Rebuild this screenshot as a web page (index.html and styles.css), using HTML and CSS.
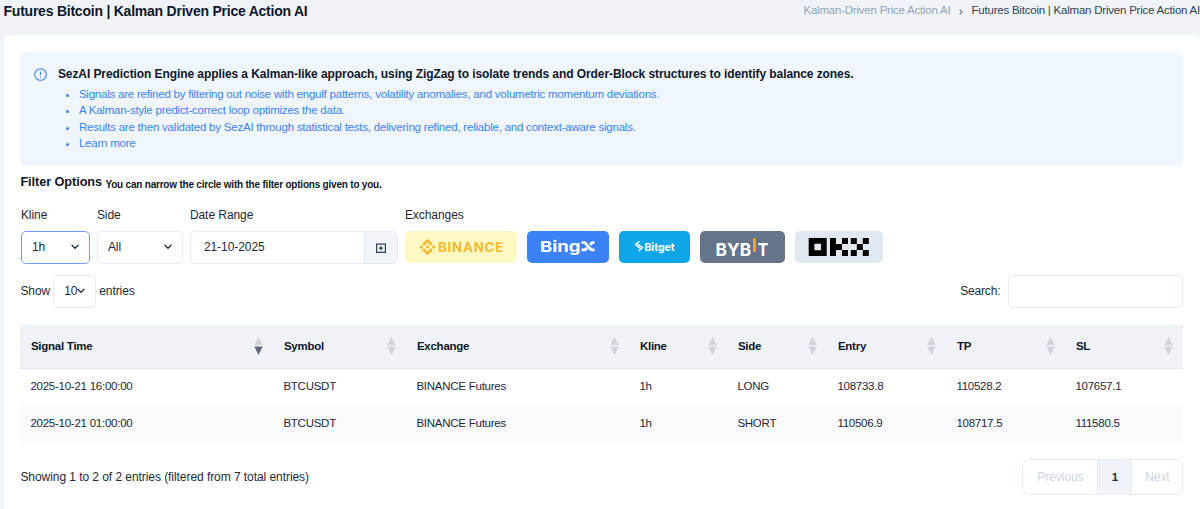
FILE: index.html
```html
<!DOCTYPE html>
<html lang="en">
<head>
<meta charset="utf-8">
<title>Futures Bitcoin | Kalman Driven Price Action AI</title>
<link rel="stylesheet" href="styles.css">
</head>
<body>
<svg class="defs" width="0" height="0">
  <symbol id="chev" viewBox="0 0 8 6"><path d="M1 1.2 4 4.4 7 1.2" fill="none" stroke="#1e293b" stroke-width="1.3" stroke-linecap="round" stroke-linejoin="round"/></symbol>
  <symbol id="sort" viewBox="0 0 9 18"><path class="up" d="M4.5 0 8.7 8H.3z"/><path class="down" d="M4.5 18 8.7 9.6H.3z"/></symbol>
</svg>
<header class="top">
  <h1>Futures Bitcoin | Kalman Driven Price Action AI</h1>
  <nav class="crumbs"><span class="muted">Kalman-Driven Price Action AI</span>
    <svg width="4" height="6" viewBox="0 0 4 6"><path d="M.7.7 3 3 .7 5.3" fill="none" stroke="#64748b" stroke-width="1.1"/></svg>
    <span>Futures Bitcoin | Kalman Driven Price Action AI</span></nav>
</header>
<main class="card">
  <section class="alert">
    <svg class="info" width="13" height="13" viewBox="0 0 13 13"><circle cx="6.5" cy="6.5" r="5.8" fill="none" stroke="#3b82f6" stroke-width="1.1"/><path d="M6.5 3.4v3.5M6.5 8.5v1.1" stroke="#3b82f6" stroke-width="1.2"/></svg>
    <div>
      <h2>SezAI Prediction Engine applies a Kalman-like approach, using ZigZag to isolate trends and Order-Block structures to identify balance zones.</h2>
      <ul>
        <li>Signals are refined by filtering out noise with engulf patterns, volatility anomalies, and volumetric momentum deviations.</li>
        <li>A Kalman-style predict-correct loop optimizes the data.</li>
        <li>Results are then validated by SezAI through statistical tests, delivering refined, reliable, and context-aware signals.</li>
        <li>Learn more</li>
      </ul>
    </div>
  </section>
  <h3>Filter Options <small>You can narrow the circle with the filter options given to you.</small></h3>
  <section class="filters">
    <div class="field kline"><label>Kline</label><div class="select focus">1h<svg width="8" height="6"><use href="#chev"/></svg></div></div>
    <div class="field side"><label>Side</label><div class="select">All<svg width="8" height="6"><use href="#chev"/></svg></div></div>
    <div class="field range"><label>Date Range</label><div class="date"><span>21-10-2025</span><i><svg width="10" height="10" viewBox="0 0 10 10"><path d="M.6 1h8.8v8.4H.6zM.6 1.2h8.8M5 3v4.4M2.8 5.2h4.4" fill="none" stroke="#334155" stroke-width="1.2"/></svg></i></div></div>
    <div class="field"><label>Exchanges</label>
      <div class="exchanges">
        <svg class="binance" width="112" height="32" viewBox="0 0 112 32"><g fill="#f3ba2f"><path d="M22.5 7.7 28 13l-2 2-3.5-3.4L19 15l-2-2zM22.5 24.3 17 19l2-2 3.5 3.4L26 17l2 2zM16.2 14l2 2-2 2-2-2zM28.8 14l2 2-2 2-2-2zM22.5 13.9l2.1 2.1-2.1 2.1-2.1-2.1z"/><text class="binance-name" x="33" y="20.6" textLength="66" lengthAdjust="spacingAndGlyphs">BINANCE</text></g></svg>
        <svg class="bingx" width="82" height="32" viewBox="0 0 82 32"><text class="bingx-name" x="13" y="20.6" textLength="40.5" lengthAdjust="spacingAndGlyphs">Bing</text><path d="M54.5 10.2h2.7q1.4 0 2.4 1.2l4.6 5.3q.8.9 2 .9h1.3v2.6h-2.4q-1.7 0-2.7-1.2l-4.5-5.2q-.8-1-2-1h-1.4zM67.5 10.2v2.5h-1.2l-2.3 2.1-1.9-2.1 1.9-1.9q.7-.6 1.6-.6zM59.2 16l1.9 2.1-1.7 1.6q-.7.5-1.6.5h-3.3v-2.6h2.4z" fill="#fff"/></svg>
        <svg class="bitget" width="71" height="32" viewBox="0 0 71 32"><path d="M20.4 10.4 16.6 13.6 20.8 17.2M19 13.4l4.4 3.2-3.8 3.4" fill="none" stroke="#fff" stroke-width="1.5"/><text class="bitget-name" x="25.4" y="20" textLength="30.3" lengthAdjust="spacingAndGlyphs">Bitget</text></svg>
        <svg class="bybit" width="85" height="32" viewBox="0 0 85 32"><text class="bybit-name" x="15.6" y="24.6" textLength="35.6" lengthAdjust="spacingAndGlyphs">BYB</text><path d="M53 7.5h3v13.3h-3z" fill="#f7a600"/><text class="bybit-name" x="57.8" y="24.6" textLength="10.5" lengthAdjust="spacingAndGlyphs">T</text></svg>
        <svg class="okx" width="88" height="32" viewBox="0 0 88 32" aria-label="OKX"><path fill-rule="evenodd" d="M13.7 7h18v18h-18zM19.4 12.7v6.6h6.6v-6.6zM35 7h6v18h-6zM41 13h6v6h-6zM47 7h6v6h-6zM47 19h6v6h-6zM55.8 7h6v6h-6zM67.8 7h6v6h-6zM61.8 13h6v6h-6zM55.8 19h6v6h-6zM67.8 19h6v6h-6z"/></svg>
      </div>
    </div>
  </section>
  <section class="tools">
    <div class="length">Show <span class="select small">10<svg width="8" height="6"><use href="#chev"/></svg></span> entries</div>
    <label class="search">Search:<input type="text"></label>
  </section>
  <table>
    <colgroup><col class="c-time"><col class="c-sym"><col class="c-ex"><col class="c-kl"><col class="c-side"><col class="c-entry"><col class="c-tp"><col class="c-sl"></colgroup>
    <thead><tr>
      <th><div class="active">Signal Time<svg width="9" height="18"><use href="#sort"/></svg></div></th>
      <th><div>Symbol<svg width="9" height="18"><use href="#sort"/></svg></div></th>
      <th><div>Exchange<svg width="9" height="18"><use href="#sort"/></svg></div></th>
      <th><div>Kline<svg width="9" height="18"><use href="#sort"/></svg></div></th>
      <th><div>Side<svg width="9" height="18"><use href="#sort"/></svg></div></th>
      <th><div>Entry<svg width="9" height="18"><use href="#sort"/></svg></div></th>
      <th><div>TP<svg width="9" height="18"><use href="#sort"/></svg></div></th>
      <th><div>SL<svg width="9" height="18"><use href="#sort"/></svg></div></th>
    </tr></thead>
    <tbody>
      <tr><td>2025-10-21 16:00:00</td><td>BTCUSDT</td><td>BINANCE Futures</td><td>1h</td><td>LONG</td><td>108733.8</td><td>110528.2</td><td>107657.1</td></tr>
      <tr><td>2025-10-21 01:00:00</td><td>BTCUSDT</td><td>BINANCE Futures</td><td>1h</td><td>SHORT</td><td>110506.9</td><td>108717.5</td><td>111580.5</td></tr>
    </tbody>
  </table>
  <footer>
    <span>Showing 1 to 2 of 2 entries (filtered from 7 total entries)</span>
    <div class="pager"><span class="prev">Previous</span><b>1</b><span class="next">Next</span></div>
  </footer>
</main>
</body>
</html>
```
FILE: styles.css
```css
* { box-sizing: border-box; }
body { margin: 0; height: 509px; overflow: hidden; background: #f0f3f8; color: #1e293b; font: 12px/16px "Liberation Sans", Arial, sans-serif; letter-spacing: -.06px; }
.defs { position: absolute; }
svg { display: block; flex: none; }
.top { display: flex; justify-content: space-between; height: 35px; padding-left: 3.5px; white-space: nowrap; }
h1 { margin: 3px 0 0; font-size: 14px; line-height: 16px; letter-spacing: -.23px; color: #0f172a; }
.crumbs { display: flex; align-items: center; height: 16px; margin-top: 2px; font-size: 11.5px; letter-spacing: -.22px; color: #334155; }
.crumbs svg { margin: 3px 9px 0 8px; }
.muted { color: #94a3b8; }
.card { margin-left: 4px; height: 474px; padding: 17px 16.6px 0 16.4px; background: #fff; border-radius: 6px 6px 0 0; }
.alert { display: flex; height: 114px; padding: 14px 14px 0; background: #eff6ff; border-radius: 5px; color: #3b82f6; white-space: nowrap; }
.info { margin: 2px 10.5px 0 0; }
h2 { margin: 0; font-size: 12px; line-height: 16px; letter-spacing: -.08px; color: #0f172a; }
ul { margin: 3.5px 0 0; padding-left: 21px; font-size: 11.5px; line-height: 16.5px; letter-spacing: -.22px; }
h3 { margin: 7px 0 0; font-size: 12.7px; line-height: 18px; color: #0f172a; }
small { font-size: 10px; letter-spacing: -.21px; position: relative; top: 2px; }
.filters { display: flex; margin-top: 15px; padding-left: .5px; }
label { display: block; }
.field label { height: 16px; margin-bottom: 8px; }
.kline { width: 69px; margin-right: 7px; }
.side { width: 86px; margin-right: 7px; }
.range { width: 208px; margin-right: 7px; }
.select { display: flex; align-items: center; justify-content: space-between; height: 33px; padding: 0 10px; border: 1px solid #e5eaf3; border-radius: 5px; line-height: 31px; }
.kline .select, .side .select { padding-bottom: 1px; }
.kline .focus { border-color: #6ea0f8; }
.date { display: flex; height: 33px; border: 1px solid #e5eaf3; border-radius: 5px; overflow: hidden; align-items: stretch; line-height: 31px; }
.date span { flex: 1; padding-left: 13px; }
.date i { width: 33px; background: #f1f5f9; border-left: 1px solid #e2e8f0; display: flex; align-items: center; justify-content: center; }
.exchanges { display: flex; gap: 10px; }
.exchanges svg { border-radius: 5px; letter-spacing: 0; }
.binance { background: #fef9c3; }
.bingx { background: #3b82f6; }
.bitget { background: #0ea5e9; }
.bybit { background: #64748b; }
.okx { background: #e2e8f0; }
.binance-name { font: 700 12.5px Inter, sans-serif; letter-spacing: .8px; }
.bingx-name { font: 700 15px Inter, sans-serif; fill: #fff; }
.bitget-name { font: 700 11px Inter, sans-serif; fill: #fff; }
.bybit-name { font: 700 18px Inter, sans-serif; fill: #fff; }
.tools { display: flex; justify-content: space-between; align-items: center; margin-top: 10px; height: 34px; }
.length { display: flex; align-items: center; gap: 3px; }
.small { width: 43px; height: 33px; padding: 0 10px; }
.search { display: flex; align-items: center; gap: 8px; letter-spacing: -.16px; }
.search input { width: 175px; height: 33px; border: 1px solid #e5eaf3; border-radius: 5px; padding: 0 8px; }
table { width: 1163px; margin-top: 17px; border-spacing: 0; table-layout: fixed; font-size: 11.5px; letter-spacing: -.25px; }
.c-time { width: 253px; }
.c-sym { width: 133px; }
.c-ex { width: 223px; }
.c-kl { width: 98px; }
.c-side { width: 100px; }
.c-entry { width: 119px; }
.c-tp { width: 119px; }
.c-sl { width: 118px; }
th { height: 44px; padding: 0 10px 1px 10.5px; background: #eff3f8; border-bottom: 1px solid #e2e8f0; text-align: left; color: #0f172a; }
th div { display: flex; align-items: center; justify-content: space-between; }
.up { fill: #d1d5db; }
.active { --down: #64697a; }
.down { fill: var(--down, #d1d5db); }
td { height: 36.5px; padding: 0 10px 2px; }
tbody tr:nth-child(2) { background: #f8fafc; }
footer { display: flex; justify-content: space-between; align-items: center; height: 36px; margin-top: 17px; }
.pager { display: flex; width: 161px; height: 36px; border: 1px solid #e5eaf3; border-radius: 7px; overflow: hidden; line-height: 34px; text-align: center; color: #cbd5e1; }
.prev { width: 74px; }
.next { flex: 1; }
.pager b { width: 35px; background: #f0f4f9; border: solid #e5eaf3; border-width: 0 1px; color: #1e293b; font-size: 11.5px; }
```
